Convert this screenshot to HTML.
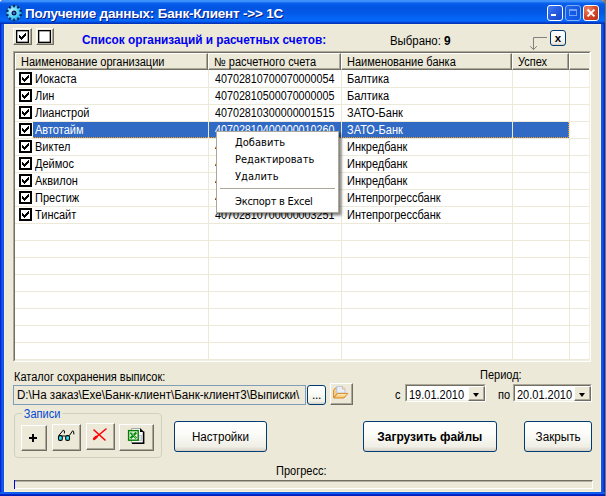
<!DOCTYPE html>
<html lang="ru">
<head>
<meta charset="utf-8">
<title>Получение данных: Банк-Клиент ->> 1С</title>
<style>
html,body{margin:0;padding:0;}
body{width:606px;height:496px;overflow:hidden;background:linear-gradient(to right,#f4f0df 0,#f4f0df 300px,#b9b8a8 600px,#77776a 605px);font-family:"Liberation Sans",sans-serif;font-size:11px;color:#000;position:relative;}
.abs{position:absolute;}
#win{position:absolute;left:0;top:0;width:605px;height:496px;background:#0831d9;border-radius:4px 6px 0 0;overflow:hidden;}
#title{position:absolute;left:0;top:0;width:606px;height:24px;
 background:linear-gradient(to bottom,#4193fd 0,#3a8cfa 1.5px,#0b64ef 3px,#0359e7 5px,#0255e1 9px,#0359e8 13px,#0463f3 17px,#0567f9 21px,#0452e2 22px,#0238c4 23px,#0230b4 24px);}
#lb{position:absolute;left:0;top:24px;width:4px;height:472px;background:linear-gradient(to right,#0019cf 0,#0a2fdc 1px,#1560ec 2px,#0a50e0 4px);}
#rb{position:absolute;left:601px;top:24px;width:4px;height:472px;background:linear-gradient(to right,#0a50e0 0,#1560ec 1px,#0a2fdc 3px,#0019cf 4px);}
#bb{position:absolute;left:0;top:492px;width:606px;height:4px;background:linear-gradient(to bottom,#0d5bec 0,#0f5eee 1.6px,#0427cc 2.4px,#0019b4 4px);}
#client{position:absolute;left:4px;top:24px;width:597px;height:468px;background:#ece9d8;box-shadow:inset 0 0 0 1px #f6efd8;}
#ttext{position:absolute;left:25px;top:5px;height:17px;line-height:17px;font-weight:bold;font-size:13.5px;color:#fff;white-space:nowrap;text-shadow:1px 1px 0 #0a1883;letter-spacing:-0.2px;}
.tb{position:absolute;top:5px;width:16px;height:16px;border:1px solid #fff;border-radius:3px;box-sizing:border-box;}
.tbb{background:linear-gradient(135deg,#447ff2 0%,#2a60e4 40%,#1746cc 100%);}
.tbr{background:radial-gradient(circle at 30% 25%,#ec8a6c 0%,#d5482a 50%,#b5300f 100%);}
/* grid */
#grid{position:absolute;left:13px;top:51px;width:578px;height:311px;box-sizing:border-box;border:1px solid;border-color:#aca899 #fff #fff #aca899;background:#fff;}
#gridin{position:absolute;left:0;top:0;width:576px;height:309px;box-sizing:border-box;border:1px solid;border-color:#716f64 #f1efe2 #f1efe2 #716f64;overflow:hidden;}
.hc{position:absolute;top:0;height:17px;box-sizing:border-box;background:#ece9d8;border-left:1px solid #fff;border-top:1px solid #fff;border-right:1px solid #716f64;border-bottom:1px solid #716f64;box-shadow:inset -1px -1px 0 #aca899;line-height:14px;padding:1px 0 0 5px;white-space:nowrap;font-size:12px;}
.tc{transform-origin:50% 50% !important;}
.t{display:inline-block;font-size:12px;transform:scaleX(.917);transform-origin:0 50%;white-space:nowrap;}
.row{position:absolute;left:0;width:574px;height:16px;}
.sel{position:absolute;left:18px;top:0;width:536px;height:16px;background:#316ac5;}
.c{position:absolute;top:1px;height:14px;line-height:14px;white-space:nowrap;font-size:12px;transform:scaleX(.917);transform-origin:0 50%;}
.hl{position:absolute;left:0;width:574px;height:1px;background:#ece9d8;}
.vl{position:absolute;top:17px;width:1px;height:290px;background:#ece9d8;}
.cb{position:absolute;width:13px;height:13px;box-sizing:border-box;border:2px solid #000;background:#fff;}
.cb svg{position:absolute;left:0;top:0;}
.sb{position:absolute;box-sizing:border-box;background:#ece9d8;border:1px solid;border-color:#fff #716f64 #716f64 #fff;box-shadow:inset -1px -1px 0 #aca899;}
.xpb{position:absolute;box-sizing:border-box;border:1px solid #003c74;border-radius:3px;background:linear-gradient(to bottom,#fff 0%,#fbfbf8 40%,#f0efe6 85%,#d6d0c5 100%);text-align:center;font-size:11px;white-space:nowrap;}
.lbl{position:absolute;white-space:nowrap;font-size:12px;line-height:14px;transform:scaleX(.917);transform-origin:0 50%;}
.dp{position:absolute;box-sizing:border-box;height:18px;background:#fff;border:1px solid;border-color:#aca899 #fff #fff #aca899;}
.dp i{position:absolute;left:0;top:0;right:0;bottom:0;border:1px solid;border-color:#716f64 #f1efe2 #f1efe2 #716f64;}
.dp span{position:absolute;left:3px;top:3px;line-height:14px;font-size:12px;transform:scaleX(.917);transform-origin:0 50%;white-space:nowrap;}
.dp b{position:absolute;right:0;top:1px;width:17px;height:15px;box-sizing:border-box;background:#ece9d8;border:1px solid;border-color:#fff #716f64 #716f64 #fff;box-shadow:inset -1px -1px 0 #aca899;}
.dp b:after{content:"";position:absolute;left:4px;top:6px;border:3.5px solid transparent;border-top:4px solid #000;border-bottom:0;}
#menu{position:absolute;left:216px;top:131px;width:123px;height:82px;box-sizing:border-box;background:#fff;border:1px solid #aca899;box-shadow:2px 2px 2px rgba(0,0,0,.34),3px 3px 3px rgba(0,0,0,.22);font-family:"DejaVu Sans Condensed","DejaVu Sans","Liberation Sans",sans-serif;}
#menu div.mi{position:absolute;left:18px;height:17px;line-height:17px;font-size:11px;white-space:nowrap;letter-spacing:0.03px;}
</style>
</head>
<body>
<div id="win">
 <div id="title"></div>
 <div id="lb"></div><div id="rb"></div><div id="bb"></div>
 <div id="client"></div>

 <!-- title icon -->
 <svg class="abs" style="left:5px;top:4px" width="18" height="18" viewBox="0 0 18 18">
  <defs><radialGradient id="gg" cx="40%" cy="38%" r="65%"><stop offset="0" stop-color="#c8f4ff"/><stop offset=".55" stop-color="#5ad2fa"/><stop offset="1" stop-color="#1aa4ea"/></radialGradient></defs>
  <path d="M16.92 7.90 L16.92 10.10 L14.77 10.25 L14.40 11.38 L16.06 12.77 L14.76 14.55 L12.93 13.40 L11.97 14.10 L12.50 16.20 L10.40 16.88 L9.59 14.87 L8.41 14.87 L7.60 16.88 L5.50 16.20 L6.03 14.10 L5.07 13.40 L3.24 14.55 L1.94 12.77 L3.60 11.38 L3.23 10.25 L1.08 10.10 L1.08 7.90 L3.23 7.75 L3.60 6.62 L1.94 5.23 L3.24 3.45 L5.07 4.60 L6.03 3.90 L5.50 1.80 L7.60 1.12 L8.41 3.13 L9.59 3.13 L10.40 1.12 L12.50 1.80 L11.97 3.90 L12.93 4.60 L14.76 3.45 L16.06 5.23 L14.40 6.62 L14.77 7.75Z" fill="url(#gg)" stroke="#0a2a6a" stroke-width=".5"/>
  <circle cx="15.94" cy="11.26" r="0.85" fill="#06143a"/><circle cx="13.29" cy="14.91" r="0.85" fill="#06143a"/><circle cx="9.00" cy="16.30" r="0.85" fill="#06143a"/><circle cx="4.71" cy="14.91" r="0.85" fill="#06143a"/><circle cx="2.06" cy="11.26" r="0.85" fill="#06143a"/><circle cx="2.06" cy="6.74" r="0.85" fill="#06143a"/><circle cx="4.71" cy="3.09" r="0.85" fill="#06143a"/><circle cx="9.00" cy="1.70" r="0.85" fill="#06143a"/><circle cx="13.29" cy="3.09" r="0.85" fill="#06143a"/><circle cx="15.94" cy="6.74" r="0.85" fill="#06143a"/>
  <circle cx="9" cy="9" r="2.5" fill="#0a1f55"/>
  <circle cx="9" cy="9" r="1.1" fill="#2f86e0"/>
 </svg>
 <div id="ttext">Получение данных: Банк-Клиент ->> 1С</div>

 <!-- caption buttons -->
 <div class="tb tbb" style="left:547px"><div class="abs" style="left:3px;top:8px;width:5px;height:2px;background:#fff"></div></div>
 <div class="tb tbb" style="left:565px;opacity:.5"><div class="abs" style="left:3px;top:3px;width:8px;height:7px;box-sizing:border-box;border:1px solid #dfe8ff;border-top-width:2px"></div></div>
 <div class="tb tbr" style="left:583px"><svg class="abs" style="left:0;top:0" width="14" height="14" viewBox="0 0 14 14"><path d="M3.6 3.6 L10.4 10.4 M10.4 3.6 L3.6 10.4" stroke="#fff" stroke-width="2" stroke-linecap="butt"/></svg></div>

 <!-- top speed buttons -->
 <div class="sb" style="left:13px;top:28px;width:19px;height:17px"></div>
 <div class="cb" style="left:16px;top:30px;border-width:1px;box-shadow:inset 0 0 0 .5px #555"><svg style="left:1px;top:1px" width="9" height="9" viewBox="0 0 9 9" shape-rendering="crispEdges"><path d="M1 3h1v1h1v1h1v-1h1v-1h1v-1h1v-1h1v3h-1v1h-1v1h-1v1h-1v1h-1v-1h-1v-1h-1z" fill="#000"/></svg></div>
 <div class="sb" style="left:36px;top:28px;width:18px;height:17px"></div>
 <div class="cb" style="left:38px;top:30px;border-width:1px;box-shadow:inset 0 0 0 .5px #555"></div>

 <div class="lbl" style="left:82px;top:33px;font-weight:bold;font-size:12.5px;color:#0000f0;line-height:15px;transform:scaleX(.946)">Список организаций и расчетных счетов:</div>
 <div class="lbl" style="left:390px;top:34px;transform:scaleX(.95)">Выбрано: <b style="font-size:12.5px">9</b></div>

 <!-- arrow + x button -->
 <svg class="abs" style="left:526px;top:32px" width="26" height="22" viewBox="0 0 26 22"><path d="M21 5.5 H7.5 V17.5 M4.2 14.2 L7.5 17.7 L10.8 14.2" fill="none" stroke="#808080" stroke-width="1"/></svg>
 <div class="xpb" style="left:550px;top:30px;width:16px;height:16px;font-weight:bold;font-size:11.5px;line-height:14px">x</div>

 <!-- grid -->
 <div id="grid"><div id="gridin">
  <div class="hc" style="left:0px;width:193px"><span class="t">Наименование организации</span></div>
  <div class="hc" style="left:193px;width:133px"><span class="t">№ расчетного счета</span></div>
  <div class="hc" style="left:326px;width:171px"><span class="t">Наименование банка</span></div>
  <div class="hc" style="left:497px;width:57px"><span class="t">Успех</span></div>
  <div class="hc" style="left:554px;width:23px"></div>
  <div class="hl" style="top:34px"></div>
  <div class="hl" style="top:51px"></div>
  <div class="hl" style="top:68px"></div>
  <div class="hl" style="top:85px"></div>
  <div class="hl" style="top:102px"></div>
  <div class="hl" style="top:119px"></div>
  <div class="hl" style="top:136px"></div>
  <div class="hl" style="top:153px"></div>
  <div class="hl" style="top:170px"></div>
  <div class="hl" style="top:187px"></div>
  <div class="hl" style="top:204px"></div>
  <div class="hl" style="top:221px"></div>
  <div class="hl" style="top:238px"></div>
  <div class="hl" style="top:255px"></div>
  <div class="hl" style="top:272px"></div>
  <div class="hl" style="top:289px"></div>
  <div class="hl" style="top:306px"></div>
  <div class="vl" style="left:193px"></div>
  <div class="vl" style="left:326px"></div>
  <div class="vl" style="left:497px"></div>
  <div class="vl" style="left:554px"></div>
  <div class="row" style="top:18px"><div class="cb" style="left:4px;top:1px"><svg width="9" height="9" viewBox="0 0 9 9" shape-rendering="crispEdges"><path d="M1 3h1v1h1v1h1v-1h1v-1h1v-1h1v-1h1v3h-1v1h-1v1h-1v1h-1v1h-1v-1h-1v-1h-1z" fill="#000"/></svg></div><div class="c" style="left:20px">Иокаста</div><div class="c" style="left:200px;transform:scaleX(.895)">40702810700070000054</div><div class="c" style="left:332px">Балтика</div></div>
  <div class="row" style="top:35px"><div class="cb" style="left:4px;top:1px"><svg width="9" height="9" viewBox="0 0 9 9" shape-rendering="crispEdges"><path d="M1 3h1v1h1v1h1v-1h1v-1h1v-1h1v-1h1v3h-1v1h-1v1h-1v1h-1v1h-1v-1h-1v-1h-1z" fill="#000"/></svg></div><div class="c" style="left:20px">Лин</div><div class="c" style="left:200px;transform:scaleX(.895)">40702810500070000005</div><div class="c" style="left:332px">Балтика</div></div>
  <div class="row" style="top:52px"><div class="cb" style="left:4px;top:1px"><svg width="9" height="9" viewBox="0 0 9 9" shape-rendering="crispEdges"><path d="M1 3h1v1h1v1h1v-1h1v-1h1v-1h1v-1h1v3h-1v1h-1v1h-1v1h-1v1h-1v-1h-1v-1h-1z" fill="#000"/></svg></div><div class="c" style="left:20px">Лианстрой</div><div class="c" style="left:200px;transform:scaleX(.895)">40702810300000001515</div><div class="c" style="left:332px">ЗАТО-Банк</div></div>
  <div class="row" style="top:69px"><div class="sel"></div><div class="abs" style="left:18px;top:15px;width:536px;height:1px;background:repeating-linear-gradient(to right,#f39a1c 0,#f39a1c 1px,rgba(0,0,0,0) 1px,rgba(0,0,0,0) 2px)"></div><div class="abs" style="left:553px;top:0;width:1px;height:16px;background:repeating-linear-gradient(to bottom,#f39a1c 0,#f39a1c 1px,rgba(0,0,0,0) 1px,rgba(0,0,0,0) 2px)"></div><div class="abs" style="left:193px;top:0;width:1px;height:16px;background:#ece9d8"></div><div class="abs" style="left:326px;top:0;width:1px;height:16px;background:#ece9d8"></div><div class="abs" style="left:497px;top:0;width:1px;height:16px;background:#ece9d8"></div><div class="cb" style="left:4px;top:1px"><svg width="9" height="9" viewBox="0 0 9 9" shape-rendering="crispEdges"><path d="M1 3h1v1h1v1h1v-1h1v-1h1v-1h1v-1h1v3h-1v1h-1v1h-1v1h-1v1h-1v-1h-1v-1h-1z" fill="#000"/></svg></div><div class="c" style="left:20px;color:#fff">Автотайм</div><div class="c" style="left:200px;color:#fff;transform:scaleX(.895)">40702810400000010260</div><div class="c" style="left:332px;color:#fff">ЗАТО-Банк</div></div>
  <div class="row" style="top:86px"><div class="cb" style="left:4px;top:1px"><svg width="9" height="9" viewBox="0 0 9 9" shape-rendering="crispEdges"><path d="M1 3h1v1h1v1h1v-1h1v-1h1v-1h1v-1h1v3h-1v1h-1v1h-1v1h-1v1h-1v-1h-1v-1h-1z" fill="#000"/></svg></div><div class="c" style="left:20px">Виктел</div><div class="c" style="left:200px;transform:scaleX(.895)">40702810600000002417</div><div class="c" style="left:332px">Инкредбанк</div></div>
  <div class="row" style="top:103px"><div class="cb" style="left:4px;top:1px"><svg width="9" height="9" viewBox="0 0 9 9" shape-rendering="crispEdges"><path d="M1 3h1v1h1v1h1v-1h1v-1h1v-1h1v-1h1v3h-1v1h-1v1h-1v1h-1v1h-1v-1h-1v-1h-1z" fill="#000"/></svg></div><div class="c" style="left:20px">Деймос</div><div class="c" style="left:200px;transform:scaleX(.895)">40702810900000001836</div><div class="c" style="left:332px">Инкредбанк</div></div>
  <div class="row" style="top:120px"><div class="cb" style="left:4px;top:1px"><svg width="9" height="9" viewBox="0 0 9 9" shape-rendering="crispEdges"><path d="M1 3h1v1h1v1h1v-1h1v-1h1v-1h1v-1h1v3h-1v1h-1v1h-1v1h-1v1h-1v-1h-1v-1h-1z" fill="#000"/></svg></div><div class="c" style="left:20px">Аквилон</div><div class="c" style="left:200px;transform:scaleX(.895)">40702810200000004572</div><div class="c" style="left:332px">Инкредбанк</div></div>
  <div class="row" style="top:137px"><div class="cb" style="left:4px;top:1px"><svg width="9" height="9" viewBox="0 0 9 9" shape-rendering="crispEdges"><path d="M1 3h1v1h1v1h1v-1h1v-1h1v-1h1v-1h1v3h-1v1h-1v1h-1v1h-1v1h-1v-1h-1v-1h-1z" fill="#000"/></svg></div><div class="c" style="left:20px">Престиж</div><div class="c" style="left:200px;transform:scaleX(.895)">40702810800000006093</div><div class="c" style="left:332px">Интепрогрессбанк</div></div>
  <div class="row" style="top:154px"><div class="cb" style="left:4px;top:1px"><svg width="9" height="9" viewBox="0 0 9 9" shape-rendering="crispEdges"><path d="M1 3h1v1h1v1h1v-1h1v-1h1v-1h1v-1h1v3h-1v1h-1v1h-1v1h-1v1h-1v-1h-1v-1h-1z" fill="#000"/></svg></div><div class="c" style="left:20px">Тинсайт</div><div class="c" style="left:200px;transform:scaleX(.895)">40702810700000003251</div><div class="c" style="left:332px">Интепрогрессбанк</div></div>
 </div></div>

 <!-- context menu -->
 <div id="menu">
  <div class="mi" style="top:2px">Добавить</div>
  <div class="mi" style="top:19px">Редактировать</div>
  <div class="mi" style="top:36px">Удалить</div>
  <div class="abs" style="left:3px;top:56px;width:115px;height:1px;background:#aca899"></div>
  <div class="mi" style="top:61px;letter-spacing:-0.25px">Экспорт в Excel</div>
 </div>

 <!-- path -->
 <div class="lbl" style="left:14px;top:370px">Каталог сохранения выписок:</div>
 <div class="abs" style="left:13px;top:385px;width:293px;height:20px;box-sizing:border-box;border:1px solid #7f9db9;background:#ece9d8;overflow:hidden"><span class="t" style="position:absolute;left:3px;top:2px;line-height:14px;transform:scaleX(.966)">D:\На заказ\Exe\Банк-клиент\Банк-клиент3\Выписки\</span></div>
 <div class="xpb" style="left:307px;top:385px;width:19px;height:20px;line-height:19px;font-size:12px;letter-spacing:-0.3px">...</div>
 <div class="sb" style="left:330px;top:383px;width:23px;height:22px"></div>
 <svg class="abs" style="left:331px;top:384px" width="20" height="18" viewBox="0 0 20 18">
  <defs><linearGradient id="fg" x1="0" y1="0" x2="0" y2="1"><stop offset="0" stop-color="#fff0c4"/><stop offset="1" stop-color="#f3c062"/></linearGradient></defs>
  <path d="M2.6 14 V6.2 L4.6 3.8 H7 V9 H6.6 L2.6 14 Z" fill="#f7cf8a" stroke="#d68a2c" stroke-width="1" stroke-linejoin="round"/>
  <path d="M5.8 2.4 H11.6 L14 4.8 V9.2 H5.8 Z" fill="#e8effb" stroke="#b4c2dc" stroke-width=".9"/>
  <path d="M11.4 2.6 V5 H13.8" fill="#fbe6b0" stroke="#e0b060" stroke-width=".8"/>
  <path d="M6.6 9.4 H16.8 L13 14 H2.7 Z" fill="url(#fg)" stroke="#d68a2c" stroke-width="1" stroke-linejoin="round"/>
 </svg>

 <!-- period -->
 <div class="lbl" style="left:480px;top:368px">Период:</div>
 <div class="lbl" style="left:395px;top:388px">с</div>
 <div class="dp" style="left:405px;top:384px;width:81px"><i></i><span>19.01.2010</span><b></b></div>
 <div class="lbl" style="left:498px;top:388px">по</div>
 <div class="dp" style="left:513px;top:384px;width:79px"><i></i><span>20.01.2010</span><b></b></div>

 <!-- group box -->
 <div class="abs" style="left:14px;top:413px;width:148px;height:45px;box-sizing:border-box;border:1px solid #d0d0bf;border-radius:4px"></div>
 <div class="lbl" style="left:22px;top:407px;padding:0 2px;background:#ece9d8;color:#0046d5">Записи</div>
 <div class="sb" style="left:21px;top:425px;width:26px;height:26px"></div>
 <div class="abs" style="left:29px;top:437px;width:8px;height:2px;background:#000"></div><div class="abs" style="left:32px;top:434px;width:2px;height:8px;background:#000"></div>
 <div class="sb" style="left:52px;top:424px;width:29px;height:27px"></div>
 <svg class="abs" style="left:57px;top:429px" width="20" height="14" viewBox="0 0 20 14">
  <rect x="1.5" y="6.6" width="3.8" height="4.8" rx="1.4" fill="#30e4f0" stroke="#000" stroke-width="1.1"/>
  <rect x="8.7" y="6.6" width="3.8" height="4.8" rx="1.4" fill="#30e4f0" stroke="#000" stroke-width="1.1"/>
  <path d="M5.4 7 H8.6 M1.8 6.6 L6.2 1.2 L7.4 1.8 V4.4 M12.3 6.6 L15.6 1.8 L16.6 2.4 L16.9 5.4" fill="none" stroke="#000" stroke-width="1"/>
 </svg>
 <div class="sb" style="left:86px;top:423px;width:29px;height:27px"></div>
 <svg class="abs" style="left:92px;top:427px" width="17" height="16" viewBox="0 0 17 16">
  <path d="M2 3 L13 13 M14 2 L2.5 11.5" fill="none" stroke="#f00" stroke-width="1.6" stroke-linecap="round"/>
  <path d="M2.2 11.8 L4.5 9.8" stroke="#f00" stroke-width="2.6" stroke-linecap="round"/>
 </svg>
 <div class="sb" style="left:119px;top:424px;width:35px;height:27px"></div>
 <svg class="abs" style="left:126px;top:426px" width="20" height="20" viewBox="0 0 20 20">
  <path d="M5.5 2.5 H14 L17.5 6 V17 H5.5 Z" fill="#fff" stroke="#a8a8a8" stroke-width="1"/>
  <path d="M14 2 V6 H18 Z" fill="#000"/>
  <path d="M17.6 5.5 V17.3 H6" fill="none" stroke="#000" stroke-width="1.6"/>
  <rect x="12.5" y="9.5" width="3" height="5" fill="#e4e4ec" stroke="#b8b8c8" stroke-width=".8"/>
  <rect x="2.6" y="4.6" width="9.6" height="9.6" fill="#e6f4e6" stroke="#008000" stroke-width="1.4"/>
  <path d="M4.5 6.5 L10.3 12.3 M10.3 6.5 L4.5 12.3" stroke="#0a8a0a" stroke-width="2.2"/>
  <path d="M5 6 L10 12" stroke="#d6efd6" stroke-width=".7"/>
 </svg>

 <div class="xpb" style="left:174px;top:421px;width:93px;height:31px;line-height:31px"><span class="t tc" style="transform:scaleX(.97)">Настройки</span></div>
 <div class="xpb" style="left:363px;top:421px;width:134px;height:31px;line-height:31px;font-weight:bold"><span class="t tc" style="font-size:12.5px;transform:scaleX(.958)">Загрузить файлы</span></div>
 <div class="xpb" style="left:524px;top:421px;width:68px;height:31px;line-height:31px"><span class="t tc" style="transform:scaleX(.975);margin-left:1px">Закрыть</span></div>

 <!-- progress -->
 <div class="lbl" style="left:276px;top:464px">Прогресс:</div>
 <div class="abs" style="left:14px;top:480px;width:579px;height:9px;box-sizing:border-box;border:1px solid;border-color:#716f64 #fff #fff #716f64;box-shadow:inset 0 1px 0 #b4b09f"></div>
 <div class="abs" style="left:14px;top:480px;width:1px;height:9px;background:#0000f0"></div>

</div>
</body>
</html>
